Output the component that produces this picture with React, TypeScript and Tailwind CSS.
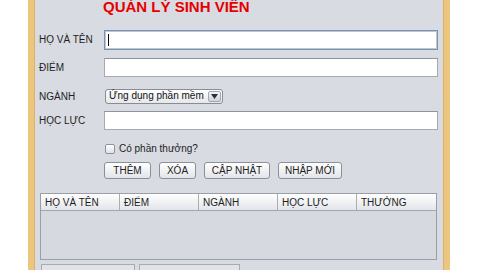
import React from "react";

const font = "font-['Liberation_Sans',Arial,sans-serif]";

function Field({ focused = false }: { focused?: boolean }) {
  return (
    <div
      className={
        focused
          ? "flex-1 h-full bg-white border border-[#7d93ab] shadow-[inset_0_0_0_1px_#b9c7d6] flex items-center"
          : "flex-1 h-full bg-white border border-[#a6abb3] border-t-[#8f949c]"
      }
    >
      {focused && <span className="ml-[3px] w-px h-[12px] bg-black" />}
    </div>
  );
}

function Btn({ label, w }: { label: string; w: string }) {
  return (
    <div
      className={`${w} h-full rounded-[3px] border border-[#8b9098] bg-gradient-to-b from-white to-[#e2e4e9] flex items-center justify-center text-[10px] text-[#222]`}
    >
      {label}
    </div>
  );
}

export default function App() {
  const labels = ["HỌ VÀ TÊN", "ĐIỂM", "NGÀNH", "HỌC LỰC", "THƯỞNG"];

  return (
    <div className={`w-[480px] h-[270px] bg-white flex overflow-hidden ${font}`}>
      <div className="w-[28px] shrink-0" />
      <div className="w-[7px] shrink-0 bg-[#ebc67c] border-r border-[#d9b36a]" />

      {/* Main panel */}
      <div className="w-[408px] shrink-0 bg-[#d8dbe2] flex flex-col pr-[5px]">
        <div className="h-[16px] pl-[68px] text-[15px] leading-[14px] font-bold text-[#e60000] whitespace-nowrap">
          QUẢN LÝ SINH VIÊN
        </div>

        <div className="mt-[14px] h-[20px] flex items-center">
          <span className="w-[69px] pl-[4px] text-[10px] text-[#1e1e1e]">HỌ VÀ TÊN</span>
          <Field focused />
        </div>

        <div className="mt-[8px] h-[19px] flex items-center">
          <span className="w-[69px] pl-[4px] text-[10px] text-[#1e1e1e]">ĐIỂM</span>
          <Field />
        </div>

        <div className="mt-[12px] h-[15px] flex items-center">
          <span className="w-[70px] pl-[4px] text-[10px] text-[#1e1e1e]">NGÀNH</span>
          <div className="w-[118px] h-full rounded-[3px] border border-[#878c95] bg-gradient-to-b from-white to-[#e6e7eb] flex items-center">
            <span className="flex-1 pl-[3px] text-[10px] text-[#111] leading-none whitespace-nowrap">Ứng dụng phần mềm</span>
            <div className="w-[13px] h-[11px] mr-[1px] shrink-0 rounded-[2px] border border-[#a3a8b0] bg-gradient-to-b from-[#f4f5f7] to-[#cfd3da] flex items-center justify-center">
              <svg width="7" height="5" viewBox="0 0 7 5">
                <path d="M0 0h7L3.5 5z" fill="#2b2f36" />
              </svg>
            </div>
          </div>
        </div>

        <div className="mt-[7px] h-[19px] flex items-center">
          <span className="w-[69px] pl-[4px] text-[10px] text-[#1e1e1e]">HỌC LỰC</span>
          <Field />
        </div>

        <div className="mt-[13px] h-[12px] flex items-center pl-[70px] gap-[4px]">
          <div className="w-[10px] h-[10px] rounded-[2px] border border-[#8e939b] bg-gradient-to-b from-white to-[#dfe1e6]" />
          <span className="text-[10px] text-[#1e1e1e]">Có phần thưởng?</span>
        </div>

        <div className="mt-[7px] h-[18px] flex items-center pl-[69px] gap-[8px]">
          <Btn label="THÊM" w="w-[47px]" />
          <Btn label="XÓA" w="w-[37px]" />
          <Btn label="CẬP NHẬT" w="w-[66px]" />
          <Btn label="NHẬP MỚI" w="w-[64px]" />
        </div>

        {/* Table */}
        <div className="mt-[14px] ml-[5px] mr-[1px] h-[67px] border border-[#9a9ea6] bg-[#d6d9e0] flex flex-col">
          <div className="h-[17px] grid grid-cols-5 bg-gradient-to-b from-white to-[#e3e5ea] border-b border-[#a3a7ae]">
            {labels.map((l, i) => (
              <div
                key={l}
                className={`flex items-center pl-[4px] text-[10px] text-[#1e1e1e] ${i < 4 ? "border-r border-[#a9adb4]" : ""}`}
              >
                {l}
              </div>
            ))}
          </div>
        </div>

        <div className="mt-[4px] ml-[6px] flex gap-[4px]">
          <div className="w-[94px] h-[6px] border-t border-x border-[#a8acb3] bg-[#e1e3e8]" />
          <div className="w-[101px] h-[6px] border-t border-x border-[#a8acb3] bg-[#e1e3e8]" />
        </div>
      </div>

      <div className="w-[7px] shrink-0 bg-[#ebc67c] border-l border-[#d9b36a]" />
      <div className="flex-1" />
    </div>
  );
}
